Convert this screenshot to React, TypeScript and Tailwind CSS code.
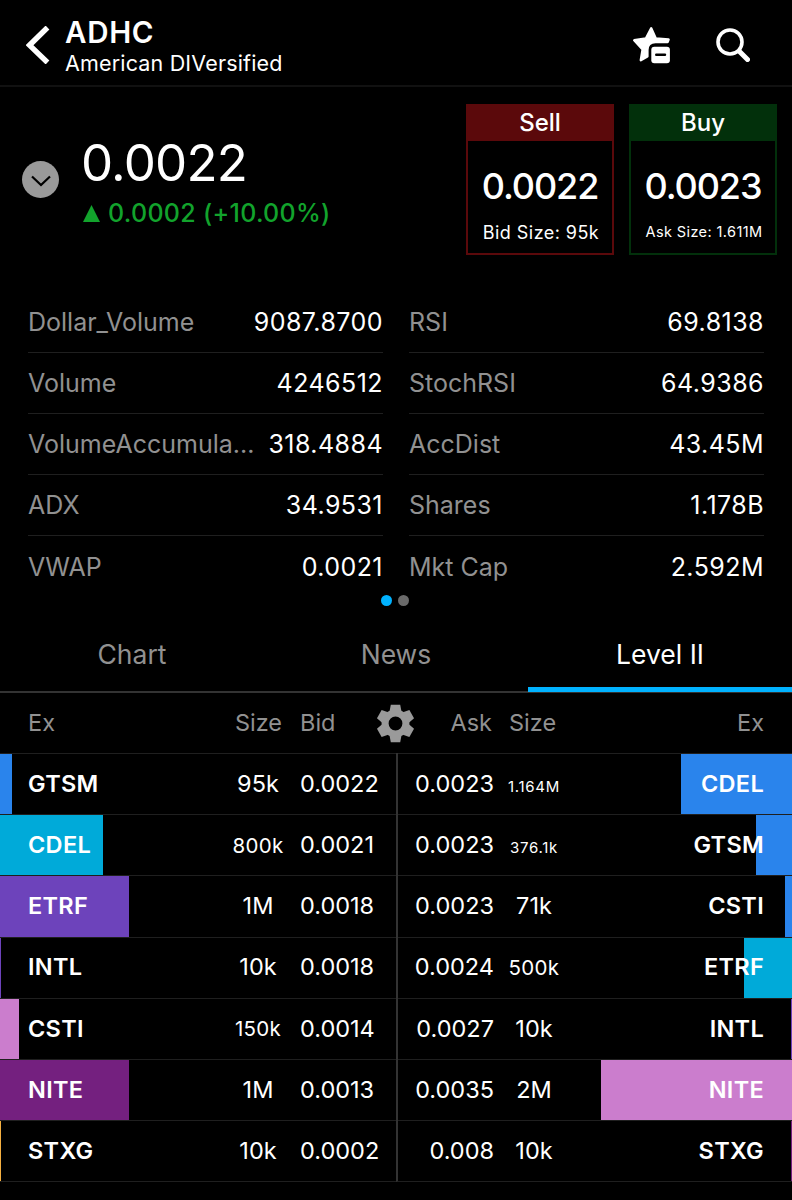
import { clsx } from "clsx";

type Stat = { label: string; value: string };

const LEFT_STATS: Stat[] = [
  { label: "Dollar_Volume", value: "9087.8700" },
  { label: "Volume", value: "4246512" },
  { label: "VolumeAccumula...", value: "318.4884" },
  { label: "ADX", value: "34.9531" },
  { label: "VWAP", value: "0.0021" },
];

const RIGHT_STATS: Stat[] = [
  { label: "RSI", value: "69.8138" },
  { label: "StochRSI", value: "64.9386" },
  { label: "AccDist", value: "43.45M" },
  { label: "Shares", value: "1.178B" },
  { label: "Mkt Cap", value: "2.592M" },
];

type Quote = { ex: string; size: string; price: string; bar: number; color: string };

const BIDS: Quote[] = [
  { ex: "GTSM", size: "95k", price: "0.0022", bar: 12, color: "bg-[#2a84ec]" },
  { ex: "CDEL", size: "800k", price: "0.0021", bar: 103.4, color: "bg-[#00aad9]" },
  { ex: "ETRF", size: "1M", price: "0.0018", bar: 129, color: "bg-[#6d43bb]" },
  { ex: "INTL", size: "10k", price: "0.0018", bar: 1, color: "bg-[#6d43bb]" },
  { ex: "CSTI", size: "150k", price: "0.0014", bar: 19.4, color: "bg-[#cb7dcd]" },
  { ex: "NITE", size: "1M", price: "0.0013", bar: 129, color: "bg-[#74207f]" },
  { ex: "STXG", size: "10k", price: "0.0002", bar: 1.3, color: "bg-[#f5b041]" },
];

const ASKS: Quote[] = [
  { ex: "CDEL", size: "1.164M", price: "0.0023", bar: 111, color: "bg-[#2a84ec]" },
  { ex: "GTSM", size: "376.1k", price: "0.0023", bar: 36, color: "bg-[#2a84ec]" },
  { ex: "CSTI", size: "71k", price: "0.0023", bar: 6.7, color: "bg-[#2a84ec]" },
  { ex: "ETRF", size: "500k", price: "0.0024", bar: 48, color: "bg-[#00aad9]" },
  { ex: "INTL", size: "10k", price: "0.0027", bar: 1, color: "bg-[#6d43bb]" },
  { ex: "NITE", size: "2M", price: "0.0035", bar: 191, color: "bg-[#cb7dcd]" },
  { ex: "STXG", size: "10k", price: "0.008", bar: 1, color: "bg-[#74207f]" },
];

const GEAR_TEETH = [0, 60, 120, 180, 240, 300];

// Longer sizes shrink so they stay inside the column.
function sizeClass(size: string) {
  if (size.length > 4) return "text-[15px] tracking-[0.7px] pt-[6px]";
  if (size.length > 3) return "text-[20.5px] tracking-[0.3px] pt-[3px]";
  return "text-[23.5px]";
}

function Header() {
  return (
    <header className="flex h-[87px] items-center border-b-2 border-[#111] pt-[5px] pr-[42px] pl-[26px]">
      <svg viewBox="0 0 24 38" className="h-[38px] w-6 shrink-0 text-white" aria-hidden>
        <path d="M21.5 1.5 3.5 19.2 21.5 36.5" fill="none" stroke="currentColor" strokeWidth="5.4" />
      </svg>
      <div className="ml-[15px] flex-1 pt-px">
        <h1 className="text-[29.5px] leading-[34px] font-semibold tracking-[0.7px]">ADHC</h1>
        <p className="text-[21.5px] leading-[28px] tracking-[0.17px]">American DIVersified</p>
      </div>
      <svg viewBox="0 0 38 38" className="mr-[46px] h-[38px] w-[38px]" aria-hidden>
        <path
          d="M19.2 2.2 23.8 12.4 36.6 13.5 35.6 16H23.5Q15.4 16 15.4 24V30.4L8.8 34.2 10.6 23.4 2.2 14.3 14 12.4Z"
          fill="#fff"
          stroke="#fff"
          strokeWidth="2.4"
          strokeLinejoin="round"
        />
        <rect x="19.3" y="20.7" width="18.6" height="16.6" rx="3" fill="#fff" />
        <path d="M24.2 28.8h8.8" stroke="#000" strokeWidth="2.4" strokeLinecap="round" />
      </svg>
      <svg viewBox="0 0 34 34" className="h-[34px] w-[34px]" aria-hidden>
        <circle cx="14" cy="14" r="12" fill="none" stroke="#fff" strokeWidth="3.6" />
        <path d="m23.5 23.5 8 8" stroke="#fff" strokeWidth="5" strokeLinecap="round" />
      </svg>
    </header>
  );
}

function TradeBox({ side, price, note }: { side: "Sell" | "Buy"; price: string; note: string }) {
  const sell = side === "Sell";
  return (
    <button
      type="button"
      className={clsx("flex h-[151px] w-[148px] flex-col items-center border-2", sell ? "border-[#5b090b]" : "border-[#02300b]")}
    >
      <span
        className={clsx(
          "flex h-[35px] w-full items-center justify-center pb-px text-[24px] font-medium",
          sell ? "bg-[#5b090b]" : "bg-[#02300b]",
        )}
      >
        {side}
      </span>
      <span className="mt-[21px] text-[36px] leading-[48px] font-medium tracking-[-1.1px]">{price}</span>
      <span
        className={clsx(
          "mt-px flex h-[44px] items-center pl-[2px]",
          sell ? "text-[18px] tracking-[0.45px]" : "text-[14.5px] tracking-[0.4px]",
        )}
      >
        {note}
      </span>
    </button>
  );
}

function PriceSummary() {
  return (
    <section className="flex h-[205px] items-start pt-[17px] pr-[15px] pl-[22px]">
      <button type="button" aria-label="Expand" className="mt-[57px] flex size-[37px] items-center justify-center rounded-full bg-[#9a9a9a]">
        <svg viewBox="0 0 20 12" className="mt-[3px] h-3 w-5" aria-hidden>
          <path d="m1 1.5 9 8.5 9-8.5" fill="none" stroke="#000" strokeWidth="2.2" />
        </svg>
      </button>
      <div className="ml-[23px] flex-1 pt-[29px]">
        <p className="-ml-px text-[51px] leading-[60px] tracking-[-0.8px]">0.0022</p>
        <p className="flex items-center text-[25px] leading-[40px] font-medium tracking-[0.3px] text-[#12a32c]">
          <svg viewBox="0 0 17 17" className="mr-[8px] ml-px size-[17px]" aria-hidden>
            <path d="M8.5 0 17 17H0Z" fill="currentColor" />
          </svg>
          0.0002 (+10.00%)
        </p>
      </div>
      <div className="flex gap-[15px]">
        <TradeBox side="Sell" price="0.0022" note="Bid Size: 95k" />
        <TradeBox side="Buy" price="0.0023" note="Ask Size: 1.611M" />
      </div>
    </section>
  );
}

function StatList({ stats }: { stats: Stat[] }) {
  return (
    <dl className="w-[355px] divide-y divide-[#1f1f1f]">
      {stats.map((s) => (
        <div key={s.label} className="flex h-[61.1px] items-center justify-between pt-px text-[25px]">
          <dt className="text-[#919191]">{s.label}</dt>
          <dd className="tracking-[0.45px]">{s.value}</dd>
        </div>
      ))}
    </dl>
  );
}

function Tabs() {
  return (
    <nav className="grid h-[73px] grid-cols-3 border-b-2 border-[#333] text-[26.5px] text-[#919191]">
      <button type="button" className="pb-[2px]">Chart</button>
      <button type="button" className="pb-[2px]">News</button>
      <button type="button" className="-mb-px border-b-[5px] border-[#00b2ff] pt-[2px] text-white">Level II</button>
    </nav>
  );
}

function GearIcon() {
  return (
    <svg viewBox="-19.5 -19.5 39 39" className="ml-[6px] size-[39px] shrink-0 text-[#9a9a9a]" aria-hidden>
      <circle r="10.4" fill="none" stroke="currentColor" strokeWidth="7" />
      {GEAR_TEETH.map((deg) => (
        <path key={deg} d="M-6-12-4.7-18.7H4.7L6-12Z" fill="currentColor" transform={`rotate(${deg})`} />
      ))}
    </svg>
  );
}

function BookHeader() {
  return (
    <div className="flex h-[60.3px] items-center px-[28px] text-[23.5px] text-[#919191]">
      <span className="w-[197px]">Ex</span>
      <span className="w-[57px] text-right">Size</span>
      <span className="ml-[18px] w-[70px]">Bid</span>
      <GearIcon />
      <span className="w-[77px] text-right">Ask</span>
      <span className="ml-[17px]">Size</span>
      <span className="ml-auto">Ex</span>
    </div>
  );
}

function BookRow({ quote, ask }: { quote: Quote; ask?: boolean }) {
  return (
    <div
      className={clsx(
        "relative flex h-[61.1px] items-center border-t border-[#1f1f1f] pb-px text-[23.5px]",
        ask ? "flex-row-reverse pr-[28px]" : "pl-[28px]",
      )}
    >
      {/* depth bar, grows from the outer edge */}
      <span
        className={clsx("absolute inset-y-0", ask ? "right-0" : "left-0", quote.color)}
        style={{ width: quote.bar }}
      />
      <span className={clsx("relative flex-1 font-semibold tracking-[0.3px]", ask && "text-right")}>{quote.ex}</span>
      <span className={clsx("w-[60px] text-center", ask && "mr-px", sizeClass(quote.size))}>{quote.size}</span>
      <span className={clsx(ask ? "mr-[10px] w-[96px] text-right" : "ml-[12px] w-[96px]")}>{quote.price}</span>
    </div>
  );
}

export default function App() {
  return (
    <main className="h-[1200px] w-[792px] overflow-hidden bg-black font-['Inter',sans-serif] text-white">
      <Header />
      <PriceSummary />
      <section className="flex justify-between px-[28px]">
        <StatList stats={LEFT_STATS} />
        <StatList stats={RIGHT_STATS} />
      </section>
      <div className="flex h-[22.5px] justify-center gap-[6px] pr-[2px]">
        <span className="-mt-[2.5px] size-[11px] rounded-full bg-[#00b2ff]" />
        <span className="-mt-[2.5px] size-[11px] rounded-full bg-[#6a6a6a]" />
      </div>
      <Tabs />
      <BookHeader />
      <section className="grid grid-cols-2">
        <div className="border-b border-[#1f1f1f]">
          {BIDS.map((q) => (
            <BookRow key={q.ex} quote={q} />
          ))}
        </div>
        <div className="border-b border-l-2 border-b-[#1f1f1f] border-l-[#333]">
          {ASKS.map((q) => (
            <BookRow key={q.ex} quote={q} ask />
          ))}
        </div>
      </section>
    </main>
  );
}
